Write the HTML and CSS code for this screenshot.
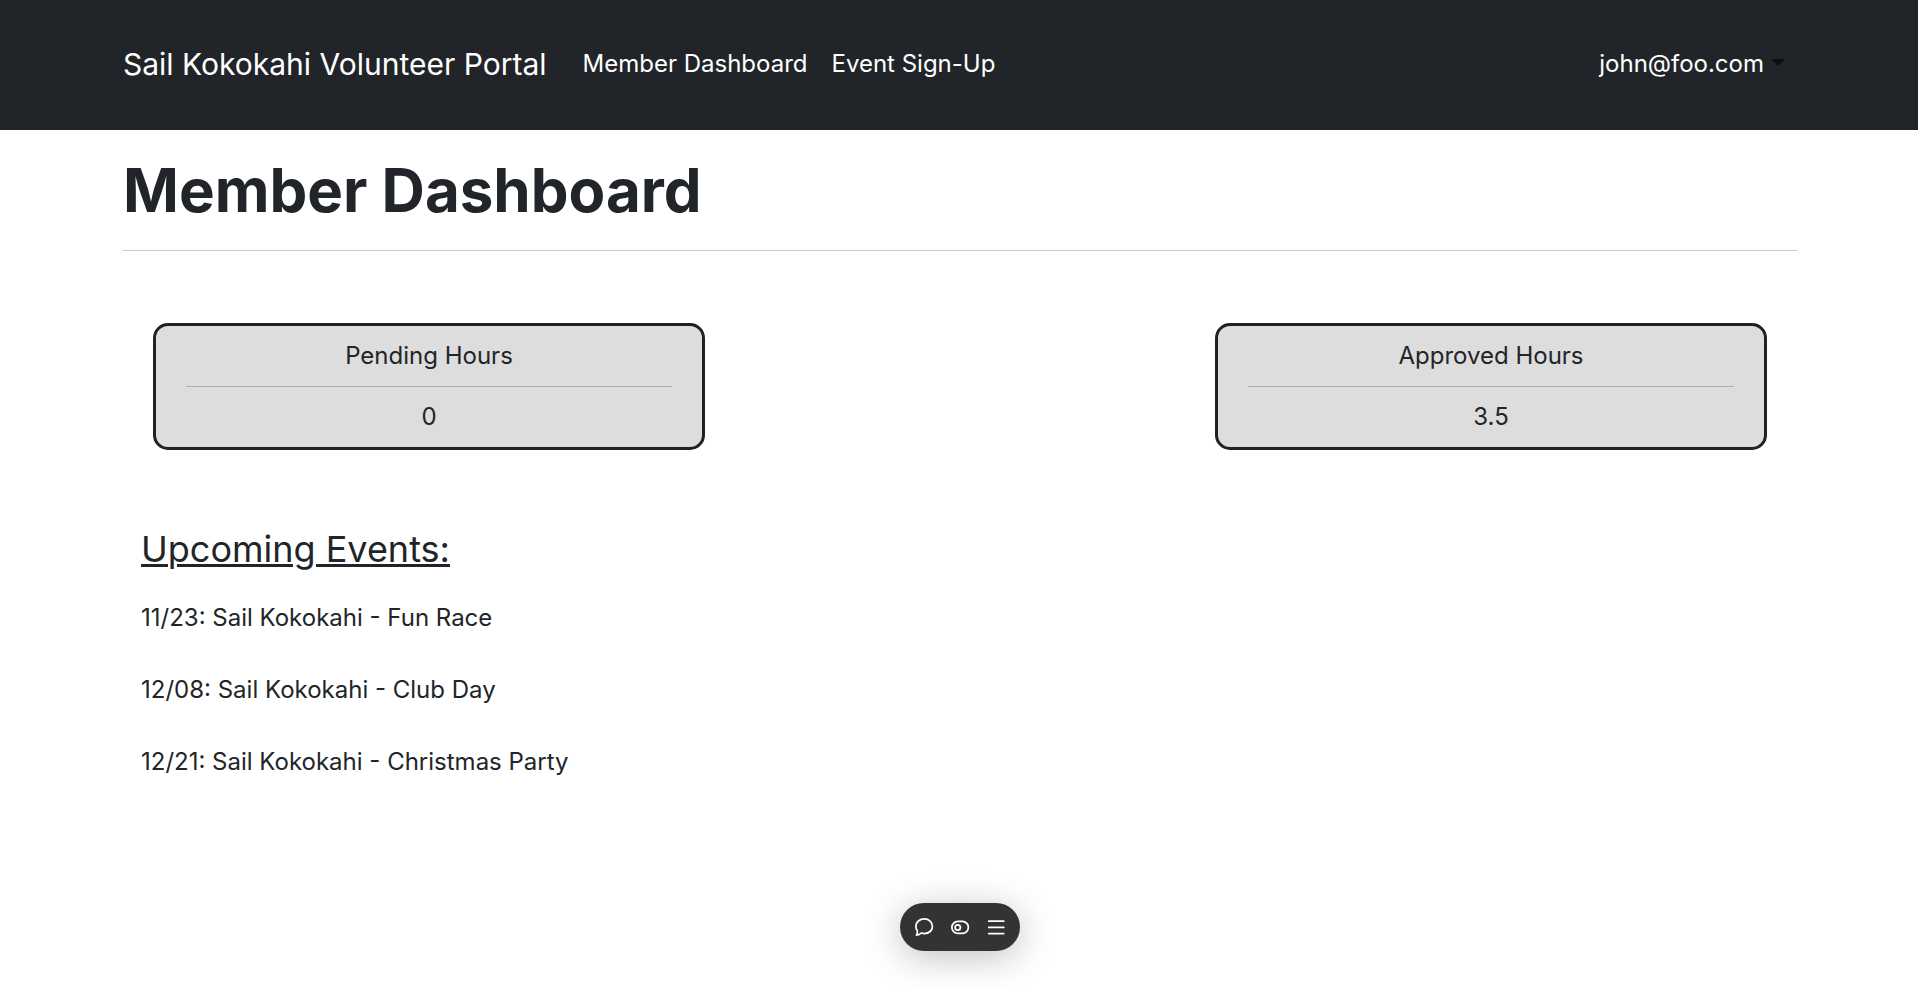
FILE: index.html
```html
<!DOCTYPE html>
<html lang="en">
<head>
<meta charset="utf-8">
<meta name="viewport" content="width=device-width, initial-scale=1">
<title>Sail Kokokahi Volunteer Portal</title>
<link rel="stylesheet" href="styles.css">
</head>
<body>
<header class="navbar">
  <div class="container navbar-inner">
    <a class="brand" href="#">Sail Kokokahi Volunteer Portal</a>
    <nav class="nav">
      <a class="nav-link" href="#">Member Dashboard</a>
      <a class="nav-link" href="#">Event Sign-Up</a>
    </nav>
    <button class="account" type="button" aria-haspopup="true">john@foo.com<span class="caret"></span></button>
  </div>
</header>
<main class="container">
  <h1 class="title">Member Dashboard</h1>
  <hr class="rule">
  <section class="stats">
    <div class="stat">
      <p class="stat-text">Pending Hours</p>
      <hr class="stat-rule">
      <p class="stat-text">0</p>
    </div>
    <div class="stat">
      <p class="stat-text">Approved Hours</p>
      <hr class="stat-rule">
      <p class="stat-text">3.5</p>
    </div>
  </section>
  <section class="events">
    <h2 class="events-title">Upcoming Events:</h2>
    <ul class="event-list">
      <li>11/23: Sail Kokokahi - Fun Race</li>
      <li>12/08: Sail Kokokahi - Club Day</li>
      <li>12/21: Sail Kokokahi - Christmas Party</li>
    </ul>
  </section>
</main>
<div class="toolbar" role="toolbar" aria-label="Page tools">
  <button class="tool" type="button" aria-label="Comment">
    <svg class="icon" viewBox="0 0 16 16"><path d="M2.6 10.8C1.8 9.8 1.500 8.700 1.500 7.500C1.500 4.100 4.600 1.500 8.300 1.500S14.700 4.100 14.700 7.500S11.900 13.200 8.400 13.200C7.400 13.200 6.600 13 5.900 12.800C4.900 13.800 3.500 14.400 2 14.500C2.700 13.300 2.900 12.100 2.600 10.800Z"/></svg>
  </button>
  <button class="tool" type="button" aria-label="View">
    <svg class="icon" viewBox="0 0 16 16"><rect x="1.500" y="3.500" width="13.200" height="9.600" rx="4.800"/><circle cx="6.200" cy="8.300" r="2.100"/></svg>
  </button>
  <button class="tool" type="button" aria-label="Menu">
    <svg class="icon" viewBox="0 0 16 16"><path d="M2.200 3.300H14.200M2.200 8.300H14.200M2.200 13.200H14.200"/></svg>
  </button>
</div>
</body>
</html>
```
FILE: styles.css
```css
* {
  box-sizing: border-box;
}

body {
  margin: 0;
  background: #fff;
  color: #212529;
  font-family: Inter, "Liberation Sans", sans-serif;
  font-size: 24px;
  line-height: 36px;
}

.container {
  max-width: 1710px;
  margin: 0 auto;
  padding: 0 17px 0 19px;
}

.navbar {
  padding: 35px 0 37px;
  background: #212529;
}

.navbar-inner {
  display: flex;
  align-items: center;
}

.brand,
.nav-link,
.account {
  color: #fff;
  text-decoration: none;
}

.brand {
  margin-right: 24px;
  font-size: 30px;
  line-height: 58px;
}

.nav {
  display: flex;
  flex: 1;
}

.nav-link {
  padding: 0 12px;
}

.account {
  padding: 0 12px;
  border: 0;
  background: none;
  font: inherit;
}

.caret {
  display: inline-block;
  margin-left: 7px;
  border: 7px solid transparent;
  border-top-color: #0b0c0e;
  border-bottom: 0;
  vertical-align: 6px;
}

.title {
  margin: 24px 0;
  font-size: 60px;
  font-weight: 700;
  line-height: 72px;
}

.rule,
.stat-rule {
  height: 1px;
  border: 0;
  background: #212529;
  opacity: 0.25;
}

.rule {
  margin: 0;
}

.stats {
  display: flex;
  justify-content: space-between;
  padding: 72px 30px;
}

.stat {
  width: 552px;
  padding: 12px 30px;
  border: 3px solid #212121;
  border-radius: 15px;
  background: #ddd;
  text-align: center;
}

.stat-text {
  margin: 0;
}

.stat-rule {
  margin: 12px 0;
}

.events {
  padding: 0 18px;
}

.events-title {
  margin: 0;
  font-size: 36px;
  font-weight: 400;
  line-height: 54px;
  text-decoration: underline;
  text-decoration-thickness: 3px;
}

.event-list {
  display: flex;
  flex-direction: column;
  gap: 36px;
  margin: 24px 0;
  padding: 0;
  list-style: none;
}

.toolbar {
  position: fixed;
  bottom: 37px;
  left: 50%;
  display: flex;
  margin-left: 1px;
  padding: 6px;
  border-radius: 24px;
  background: #333;
  box-shadow: 0 6px 36px rgba(0, 0, 0, 0.25);
  transform: translateX(-50%);
}

.tool {
  display: flex;
  align-items: center;
  justify-content: center;
  width: 36px;
  height: 36px;
  padding: 0;
  border: 0;
  background: none;
}

.icon {
  width: 20px;
  height: 20px;
  fill: none;
  stroke: #fff;
  stroke-width: 1.4;
  stroke-linecap: round;
  stroke-linejoin: round;
}
```
